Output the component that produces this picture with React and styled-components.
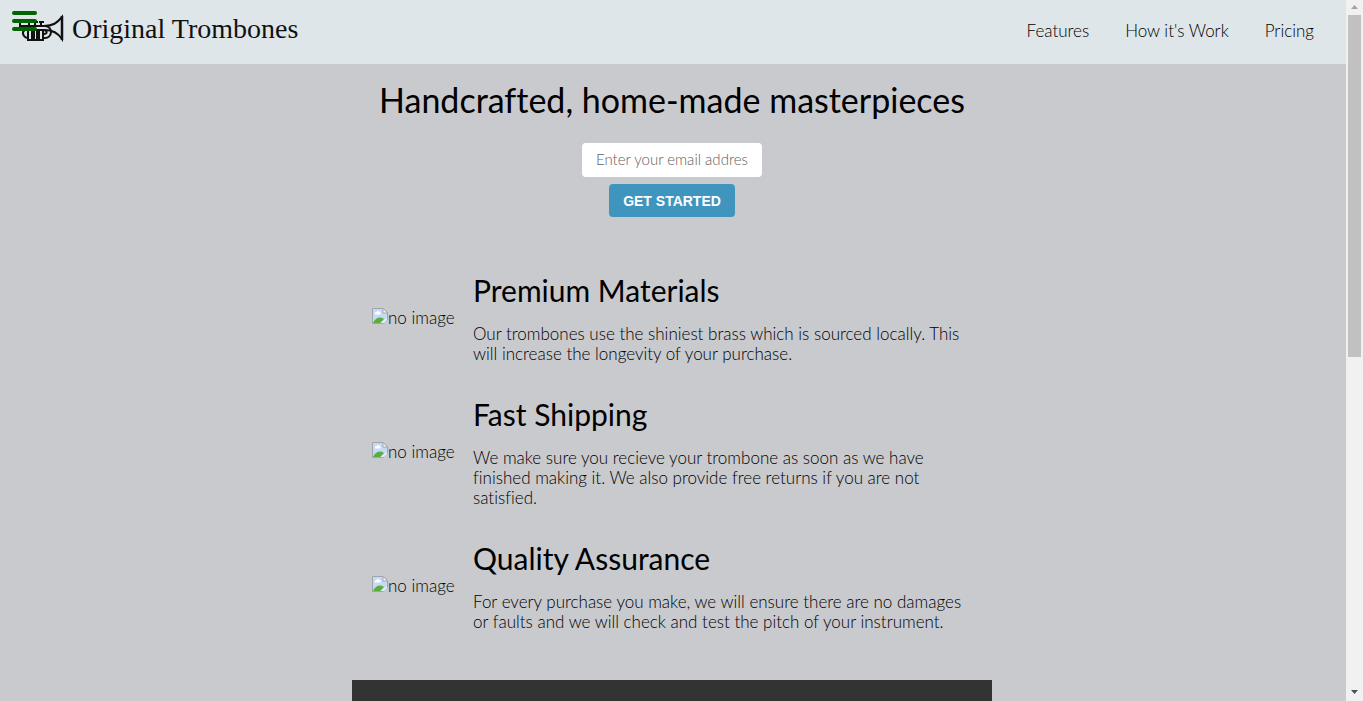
import React from "react";
import styled, { createGlobalStyle } from "styled-components";

const GlobalStyle = createGlobalStyle`
  *, *::before, *::after { box-sizing: border-box; }
  body {
    margin: 0;
    background: #c9cace;
    color: #000;
    font-family: Lato, "Open Sans", sans-serif;
    font-size: 17px;
    font-weight: 300;
    font-variant-ligatures: none;
    line-height: 20px;
  }
  h1, h2, p, ul { margin: 0; padding: 0; }
`;

const Frame = styled.div`
  display: grid;
  grid-template-columns: minmax(0, 1fr) 17px;
  height: 100vh;
`;

const Page = styled.div`
  overflow: hidden;
`;

const Header = styled.header`
  position: relative;
  display: flex;
  align-items: center;
  justify-content: space-between;
  height: 64px;
  padding: 0 32px 2px 16px;
  background: #dee6e9;
`;

const Logo = styled.a`
  display: flex;
  align-items: center;
  gap: 8px;
  padding-bottom: 4px;
  color: #111;
  font-family: "Liberation Serif", serif;
  font-size: 28px;
  font-weight: 400;
  line-height: 32px;
  text-decoration: none;
`;

const MenuButton = styled.button`
  position: absolute;
  top: 5px;
  left: 5px;
  display: flex;
  flex-direction: column;
  gap: 4px;
  width: 39px;
  padding: 6px 7px;
  border: 0;
  background: transparent;
`;

const MenuBar = styled.span`
  width: 25px;
  height: 4px;
  border-radius: 2px;
  background: #006400;
`;

const NavList = styled.ul`
  display: flex;
  gap: 36px;
  list-style: none;
`;

const NavLink = styled.a`
  color: #000;
  text-decoration: none;
`;

const Content = styled.div`
  padding-right: 2px;
`;

const Main = styled.main`
  max-width: 640px;
  margin: 0 auto;
`;

const Hero = styled.section`
  display: flex;
  flex-direction: column;
  align-items: center;
  padding-top: 16px;
`;

const HeroTitle = styled.h1`
  font-size: 34px;
  font-weight: 400;
  line-height: 40px;
  white-space: nowrap;
`;

const SignupForm = styled.form`
  display: flex;
  flex-direction: column;
  align-items: center;
  gap: 7px;
  padding-top: 23px;
`;

const EmailInput = styled.input`
  width: 180px;
  height: 34px;
  padding: 0 14px 2px;
  border: 0;
  border-radius: 4px;
  background: #fff;
  font: inherit;
  font-size: 15px;
  &::placeholder { color: #606060; opacity: 1; }
`;

const SubmitButton = styled.button`
  height: 33px;
  padding: 0 14px;
  border: 0;
  border-radius: 4px;
  background: #4095bf;
  color: #fff;
  font-family: "Liberation Sans", sans-serif;
  font-size: 14px;
  font-weight: 700;
`;

const Features = styled.section`
  display: grid;
  grid-template-columns: 85px 1fr;
  column-gap: 16px;
  padding: 55px 20px 48px;
`;

const Pictures = styled.div`
  display: flex;
  flex-direction: column;
  gap: 114px;
  padding-top: 36px;
`;

const Picture = styled.span`
  display: flex;
  height: 20px;
  white-space: nowrap;
`;

const Articles = styled.div`
  display: flex;
  flex-direction: column;
  gap: 32px;
`;

const FeatureTitle = styled.h2`
  margin-bottom: 16px;
  font-size: 30px;
  font-weight: 400;
  line-height: 36px;
`;

const Video = styled.section`
  height: 360px;
  background: #333;
`;

const Scrollbar = styled.div`
  display: flex;
  flex-direction: column;
  justify-content: space-between;
  padding: 0 2px;
  background: #f1f1f1;
`;

const Arrow = styled.svg`
  display: block;
  width: 13px;
  height: 15px;
`;

const Track = styled.div`
  flex: 1;
`;

const Thumb = styled.div`
  height: 51%;
  background: #c1c1c1;
`;

const Trumpet = () => (
  <svg width="48" height="32" viewBox="0 0 48 32" fill="none" stroke="#111" aria-hidden="true">
    <path d="M4 13H28C37 13 41 10 46 4V26C42 20 37 17 29 17H6" strokeWidth="2" />
    <path d="M46 3V27" strokeWidth="2.500" />
    <path d="M4 10V16M11 9H16M17 9H22M23 9H28M13 9V13M19 9V13M25 9V13" strokeWidth="2" />
    <path d="M29 13C38 14 36 25 29 25H27M11 25C6 23 6 18 9 17M28 17C32 18 31 21 28 21" strokeWidth="2" />
    <path d="M12 16V27H16V16M18 16V27H21V16M23 16V27H27V16" strokeWidth="2" />
  </svg>
);

const BrokenImage = () => (
  <svg width="16" height="16" viewBox="0 0 16 16" aria-hidden="true">
    <path d="M.5.5H11L15.500 5V15.500H.5Z" fill="#c6d9f7" stroke="#a0a3a8" />
    <path d="M3 6.500C2 4.500 4 4 4.500 4.200C5 2.500 7 2.500 7.500 4C9 4 9 6 8 6.500Z" fill="#fff" />
    <path d="M1 15C3 10 8 8 12 11L8 15Z" fill="#5aae3b" />
    <path d="M11 .5V5H15.500Z" fill="#fff" stroke="#a0a3a8" />
    <path d="M11 16L16 11.500V16Z" fill="#c9cace" />
    <path d="M10 15L15 10.500" stroke="#fff" />
  </svg>
);

const features = [
  {
    title: "Premium Materials",
    text: "Our trombones use the shiniest brass which is sourced locally. This will increase the longevity of your purchase.",
  },
  {
    title: "Fast Shipping",
    text: "We make sure you recieve your trombone as soon as we have finished making it. We also provide free returns if you are not satisfied.",
  },
  {
    title: "Quality Assurance",
    text: "For every purchase you make, we will ensure there are no damages or faults and we will check and test the pitch of your instrument.",
  },
];

export default function App() {
  return (
    <>
      <GlobalStyle />
      <Frame>
        <Page>
          <Header>
            <Logo href="#home"><Trumpet />Original Trombones</Logo>
            <MenuButton type="button" aria-label="Menu"><MenuBar /><MenuBar /><MenuBar /></MenuButton>
            <nav>
              <NavList>
                <li><NavLink href="#features">Features</NavLink></li>
                <li><NavLink href="#how">How it's Work</NavLink></li>
                <li><NavLink href="#pricing">Pricing</NavLink></li>
              </NavList>
            </nav>
          </Header>
          <Content>
            <Main>
              <Hero id="home">
                <HeroTitle>Handcrafted, home-made masterpieces</HeroTitle>
                <SignupForm>
                  <EmailInput type="email" aria-label="Email address" placeholder="Enter your email address" />
                  <SubmitButton type="submit">GET STARTED</SubmitButton>
                </SignupForm>
              </Hero>
              <Features id="features">
                <Pictures>
                  {features.map((f) => <Picture key={f.title}><BrokenImage />no image</Picture>)}
                </Pictures>
                <Articles>
                  {features.map((f) => (
                    <article key={f.title}>
                      <FeatureTitle>{f.title}</FeatureTitle>
                      <p>{f.text}</p>
                    </article>
                  ))}
                </Articles>
              </Features>
              <Video id="how" />
            </Main>
          </Content>
        </Page>
        <Scrollbar aria-hidden="true">
          <Arrow viewBox="0 0 13 15"><path d="M3 9H10L6.500 5Z" fill="#a3a3a3" /></Arrow>
          <Track><Thumb /></Track>
          <Arrow viewBox="0 0 13 15"><path d="M3 4H10L6.500 8Z" fill="#505050" /></Arrow>
        </Scrollbar>
      </Frame>
    </>
  );
}
